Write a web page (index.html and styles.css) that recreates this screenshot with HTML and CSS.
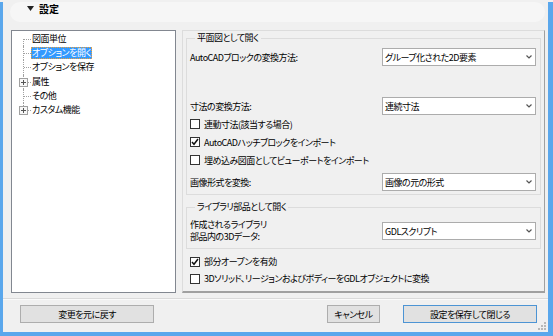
FILE: index.html
```html
<!DOCTYPE html>
<html lang="ja">
<head>
<meta charset="utf-8">
<title>設定</title>
<link rel="stylesheet" href="styles.css">
</head>
<body>
<div class="window">
  <div class="header">
    <svg class="tri" width="7" height="5" viewBox="0 0 7 5"><path d="M0 0H7L3.5 5Z" fill="#222"/></svg>
    <span class="title">設定</span>
  </div>

  <div class="main">
    <div class="tree">
      <div class="node first"><span class="label">図面単位</span></div>
      <div class="node"><span class="label sel">オプションを開く</span></div>
      <div class="node"><span class="label">オプションを保存</span></div>
      <div class="node"><svg class="plus" width="9" height="9" viewBox="0 0 9 9"><rect x="0.5" y="0.5" width="8" height="8" fill="#f7f7f7" stroke="#a0a0a0"/><path d="M2 4.5H7M4.5 2V7" stroke="#555"/></svg><span class="label">属性</span></div>
      <div class="node"><span class="label">その他</span></div>
      <div class="node last"><svg class="plus" width="9" height="9" viewBox="0 0 9 9"><rect x="0.5" y="0.5" width="8" height="8" fill="#f7f7f7" stroke="#a0a0a0"/><path d="M2 4.5H7M4.5 2V7" stroke="#555"/></svg><span class="label">カスタム機能</span></div>
    </div>

    <div class="panel">
      <fieldset class="group g1">
        <legend>平面図として開く</legend>
        <div class="g-row">
          <span>AutoCADブロックの変換方法:</span>
          <div class="select"><span>グループ化された2D要素</span><svg width="6" height="4" viewBox="0 0 6 4"><path d="M0.5 0.5L3 3L5.5 0.5" fill="none" stroke="#555" stroke-width="1.2"/></svg></div>
        </div>
        <div class="g-row dim-row">
          <span>寸法の変換方法:</span>
          <div class="select"><span>連続寸法</span><svg width="6" height="4" viewBox="0 0 6 4"><path d="M0.5 0.5L3 3L5.5 0.5" fill="none" stroke="#555" stroke-width="1.2"/></svg></div>
        </div>
        <div class="check-row"><span class="box"></span><span>連動寸法(該当する場合)</span></div>
        <div class="check-row"><span class="box"><svg width="8" height="8" viewBox="0 0 8 8"><path d="M1 4L3 6.3L7 1" fill="none" stroke="#111" stroke-width="1.5"/></svg></span><span>AutoCADハッチブロックをインポート</span></div>
        <div class="check-row"><span class="box"></span><span>埋め込み図面としてビューポートをインポート</span></div>
        <div class="g-row img-row">
          <span>画像形式を変換:</span>
          <div class="select"><span>画像の元の形式</span><svg width="6" height="4" viewBox="0 0 6 4"><path d="M0.5 0.5L3 3L5.5 0.5" fill="none" stroke="#555" stroke-width="1.2"/></svg></div>
        </div>
      </fieldset>

      <fieldset class="group g2">
        <legend>ライブラリ部品として開く</legend>
        <div class="g-row lib-row">
          <span class="two-line">作成されるライブラリ<br>部品内の3Dデータ:</span>
          <div class="select"><span>GDLスクリプト</span><svg width="6" height="4" viewBox="0 0 6 4"><path d="M0.5 0.5L3 3L5.5 0.5" fill="none" stroke="#555" stroke-width="1.2"/></svg></div>
        </div>
      </fieldset>

      <div class="outer-checks">
        <div class="check-row"><span class="box"><svg width="8" height="8" viewBox="0 0 8 8"><path d="M1 4L3 6.3L7 1" fill="none" stroke="#111" stroke-width="1.5"/></svg></span><span>部分オープンを有効</span></div>
        <div class="check-row"><span class="box"></span><span>3Dソリッド、リージョンおよびボディーをGDLオブジェクトに変換</span></div>
      </div>
    </div>
  </div>

  <div class="sep"></div>

  <div class="buttons">
    <div class="btn revert">変更を元に戻す</div>
    <div class="spacer"></div>
    <div class="btn cancel">キャンセル</div>
    <div class="btn save">設定を保存して閉じる</div>
  </div>

  <svg class="grip" width="8" height="8" viewBox="0 0 8 8"><g fill="#b8b8b8"><rect x="6" y="0" width="2" height="2"/><rect x="3" y="3" width="2" height="2"/><rect x="6" y="3" width="2" height="2"/><rect x="0" y="6" width="2" height="2"/><rect x="3" y="6" width="2" height="2"/><rect x="6" y="6" width="2" height="2"/></g></svg>
</div>
</body>
</html>
```

FILE: styles.css
```css
html, body {
  margin: 0;
  padding: 0;
}

body {
  background: #f0f0f0;
  font-family: "Noto Sans CJK JP", "Noto Sans", sans-serif;
  font-size: 9px;
  letter-spacing: -0.5px;
  color: #000;
  font-feature-settings: "palt";
}

.window {
  position: relative;
  width: 553px;
  height: 336px;
  box-sizing: border-box;
  border-left: 3px solid #5aa7ec;
  border-right: 5px solid #5aa7ec;
  border-bottom: 6px solid #5aa7ec;
  background: #f0f0f0;
}

.header {
  height: 20px;
  margin: 2px 3px 0 7px;
  background: #f6f6f6;
  border-radius: 10px;
  display: flex;
  align-items: flex-start;
  padding-left: 17px;
  box-sizing: border-box;
}

.tri {
  margin-top: 4px;
  margin-right: 5px;
}

.title {
  font-size: 10px;
  font-weight: bold;
  line-height: 12px;
  margin-top: 1px;
  letter-spacing: 0;
}

.main {
  display: flex;
  height: 263px;
  margin-top: 8px;
  padding-left: 8px;
  padding-right: 3px;
  gap: 6px;
}

.tree {
  width: 165px;
  box-sizing: border-box;
  border: 1px solid #828790;
  background: #fff;
  padding-top: 1px;
}

.node {
  position: relative;
  height: 14.2px;
  display: flex;
  align-items: center;
  padding-left: 20px;
  line-height: 12px;
}

.node::before {
  content: "";
  position: absolute;
  left: 11px;
  top: 0;
  bottom: 0;
  border-left: 1px dotted #a0a0a0;
}

.node.first::before {
  top: 7px;
}

.node.last::before {
  bottom: 7px;
}

.node::after {
  content: "";
  position: absolute;
  left: 12px;
  top: 7px;
  width: 7px;
  border-top: 1px dotted #a0a0a0;
}

.plus {
  position: absolute;
  left: 7px;
  top: 3px;
  z-index: 1;
}

.label {
  padding: 0 1px;
  margin-left: -1px;
}

.label.sel {
  background: #3399ff;
  color: #fff;
  outline: 1px dotted #e8a040;
  outline-offset: -1px;
}

.panel {
  flex: 1;
  border: 1px solid #dcdcdc;
  border-right-color: #a0a0a0;
  border-bottom: 2px solid #a0a0a0;
  padding: 1px 3px 0 3px;
}

.group {
  margin: 0;
  border: 1px solid #dcdcdc;
  padding: 4px 3px 3px 3px;
  min-width: 0;
}

.group legend {
  padding: 0 2px;
  margin-left: 5px;
  line-height: 12px;
}

.g-row {
  display: flex;
  align-items: center;
  justify-content: space-between;
  height: 18px;
}

.dim-row {
  margin-top: 31px;
}

.img-row {
  margin-top: 4px;
}

.select {
  width: 154px;
  height: 18px;
  box-sizing: border-box;
  border: 1px solid #acacac;
  background: #fff;
  display: flex;
  align-items: center;
  justify-content: space-between;
  padding: 0 3px 0 2px;
  margin-right: 1px;
}

.check-row {
  display: flex;
  align-items: center;
  height: 18px;
  gap: 4px;
}

.box {
  width: 10px;
  height: 10px;
  box-sizing: border-box;
  border: 1px solid #333;
  background: #fff;
  display: flex;
  align-items: center;
  justify-content: center;
}

.g2 {
  margin-top: 6px;
  padding-top: 6px;
  padding-bottom: 5px;
}

.lib-row {
  height: 24px;
}

.two-line {
  line-height: 12px;
}

.outer-checks {
  margin-top: 4px;
  padding-left: 4px;
}

.outer-checks .check-row {
  height: 17px;
}

.sep {
  margin-top: 5px;
  border-top: 1px solid #dadada;
  border-bottom: 1px solid #fafafa;
}

.buttons {
  display: flex;
  margin-top: 5px;
  padding: 0 11px 0 17px;
}

.spacer {
  flex: 1;
}

.btn {
  height: 18px;
  box-sizing: border-box;
  border: 1px solid #adadad;
  background: #e1e1e1;
  display: flex;
  align-items: center;
  justify-content: center;
}

.revert {
  width: 134px;
}

.cancel {
  width: 53px;
}

.save {
  width: 134px;
  margin-left: 23px;
  border-color: #4c94d4;
}

.grip {
  position: absolute;
  right: 2px;
  bottom: 2px;
}
```
